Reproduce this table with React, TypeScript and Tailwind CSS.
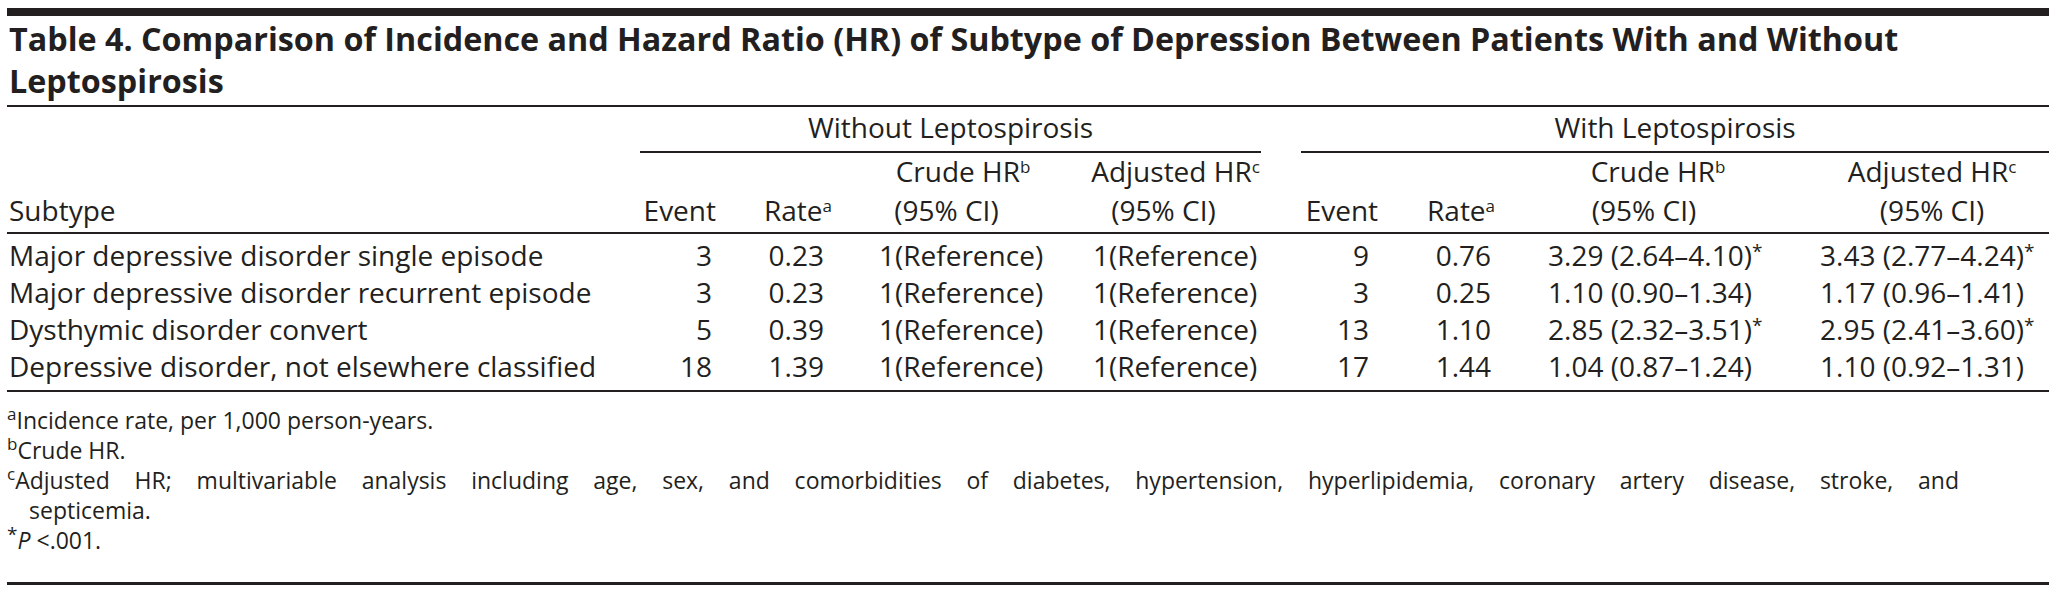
const rows = [
  {
    subtype: "Major depressive disorder single episode",
    ev0: "3",
    rate0: "0.23",
    ev1: "9",
    rate1: "0.76",
    crude: "3.29 (2.64–4.10)",
    crudeSig: true,
    adj: "3.43 (2.77–4.24)",
    adjSig: true,
  },
  {
    subtype: "Major depressive disorder recurrent episode",
    ev0: "3",
    rate0: "0.23",
    ev1: "3",
    rate1: "0.25",
    crude: "1.10 (0.90–1.34)",
    crudeSig: false,
    adj: "1.17 (0.96–1.41)",
    adjSig: false,
  },
  {
    subtype: "Dysthymic disorder convert",
    ev0: "5",
    rate0: "0.39",
    ev1: "13",
    rate1: "1.10",
    crude: "2.85 (2.32–3.51)",
    crudeSig: true,
    adj: "2.95 (2.41–3.60)",
    adjSig: true,
  },
  {
    subtype: "Depressive disorder, not elsewhere classified",
    ev0: "18",
    rate0: "1.39",
    ev1: "17",
    rate1: "1.44",
    crude: "1.04 (0.87–1.24)",
    crudeSig: false,
    adj: "1.10 (0.92–1.31)",
    adjSig: false,
  },
];

function Sup({ children }: { children: React.ReactNode }) {
  return <span className="relative -top-[9px] text-[17px] leading-none">{children}</span>;
}

function Star() {
  return <span className="relative -top-[8px] text-[19px] leading-none">*</span>;
}

export default function App() {
  return (
    <div className="w-[2060px] h-[593px] bg-white pl-[7px] pr-[11px] pt-[8px] text-[#231f20] font-['Open_Sans',sans-serif] overflow-hidden">
      <div className="h-[8px] bg-[#231f20]" />
      <h1 className="pt-[1px] pb-[4px] pl-[2px] text-[32.3px] font-bold leading-[42px] border-b-2 border-[#231f20] whitespace-nowrap">
        Table 4. Comparison of Incidence and Hazard Ratio (HR) of Subtype of Depression Between Patients With and Without
        <br />
        Leptospirosis
      </h1>

      <table className="table-fixed border-separate border-spacing-0 w-[2042px] text-[28px] leading-[37px]">
        <colgroup>
          <col className="w-[633px]" />
          <col className="w-[76px]" />
          <col className="w-[124px]" />
          <col className="w-[226px]" />
          <col className="w-[195px]" />
          <col className="w-[40px]" />
          <col className="w-[77px]" />
          <col className="w-[122px]" />
          <col className="w-[300px]" />
          <col className="w-[249px]" />
        </colgroup>
        <thead>
          <tr>
            <td className="pt-[2px] pb-[5px]" />
            <th colSpan={4} className="pt-[2px] pb-[5px] font-normal text-center border-b-2 border-[#231f20]">
              Without Leptospirosis
            </th>
            <td />
            <th colSpan={4} className="pt-[2px] pb-[5px] font-normal text-center border-b-2 border-[#231f20]">
              With Leptospirosis
            </th>
          </tr>
          <tr>
            <td />
            <td />
            <td />
            <th className="font-normal text-center pl-[20px]">
              Crude HR<Sup>b</Sup>
            </th>
            <th className="font-normal text-center pl-[24px]">
              Adjusted HR<Sup>c</Sup>
            </th>
            <td />
            <td />
            <td />
            <th className="font-normal text-center pl-[16px]">
              Crude HR<Sup>b</Sup>
            </th>
            <th className="font-normal text-center pl-[15px]">
              Adjusted HR<Sup>c</Sup>
            </th>
          </tr>
          <tr className="[&>*]:border-b-2 [&>*]:border-[#231f20] [&>*]:pt-[2px] [&>*]:pb-[3px] [&>*]:font-normal">
            <th className="text-left pl-[2px]">Subtype</th>
            <th className="text-right">Event</th>
            <th className="text-right pr-[8px]">
              Rate<Sup>a</Sup>
            </th>
            <th className="text-center pr-[13px]">(95% CI)</th>
            <th className="text-center">(95% CI)</th>
            <th />
            <th className="text-right">Event</th>
            <th className="text-right pr-[5px]">
              Rate<Sup>a</Sup>
            </th>
            <th className="text-center pr-[12px]">(95% CI)</th>
            <th className="text-center pl-[15px]">(95% CI)</th>
          </tr>
        </thead>
        <tbody>
          {rows.map((r, i) => {
            const edge =
              i === 0
                ? "[&>td]:pt-[3px]"
                : i === rows.length - 1
                ? "[&>td]:pb-[5px] [&>td]:border-b-2 [&>td]:border-[#231f20]"
                : "";
            return (
              <tr key={r.subtype} className={edge}>
                <td className="pl-[2px] whitespace-nowrap">{r.subtype}</td>
                <td className="text-right pr-[4px]">{r.ev0}</td>
                <td className="text-right pr-[16px]">{r.rate0}</td>
                <td className="pl-[39px] whitespace-nowrap">1(Reference)</td>
                <td className="pl-[27px] whitespace-nowrap">1(Reference)</td>
                <td />
                <td className="text-right pr-[9px]">{r.ev1}</td>
                <td className="text-right pr-[9px]">{r.rate1}</td>
                <td className="pl-[48px] whitespace-nowrap">
                  {r.crude}
                  {r.crudeSig && <Star />}
                </td>
                <td className="pl-[20px] whitespace-nowrap">
                  {r.adj}
                  {r.adjSig && <Star />}
                </td>
              </tr>
            );
          })}
        </tbody>
      </table>

      <div className="pt-[13px] pb-[27px] text-[23px] leading-[30px] border-b-[3px] border-[#231f20]">
        <p>
          <Sup>a</Sup>Incidence rate, per 1,000 person-years.
        </p>
        <p>
          <Sup>b</Sup>Crude HR.
        </p>
        <p className="pr-[90px] text-justify [text-align-last:justify]">
          <Sup>c</Sup>Adjusted HR; multivariable analysis including age, sex, and comorbidities of diabetes, hypertension,
          hyperlipidemia, coronary artery disease, stroke, and
        </p>
        <p className="pl-[22px]">septicemia.</p>
        <p>
          <Star />
          <i>P</i> &lt;.001.
        </p>
      </div>
    </div>
  );
}
